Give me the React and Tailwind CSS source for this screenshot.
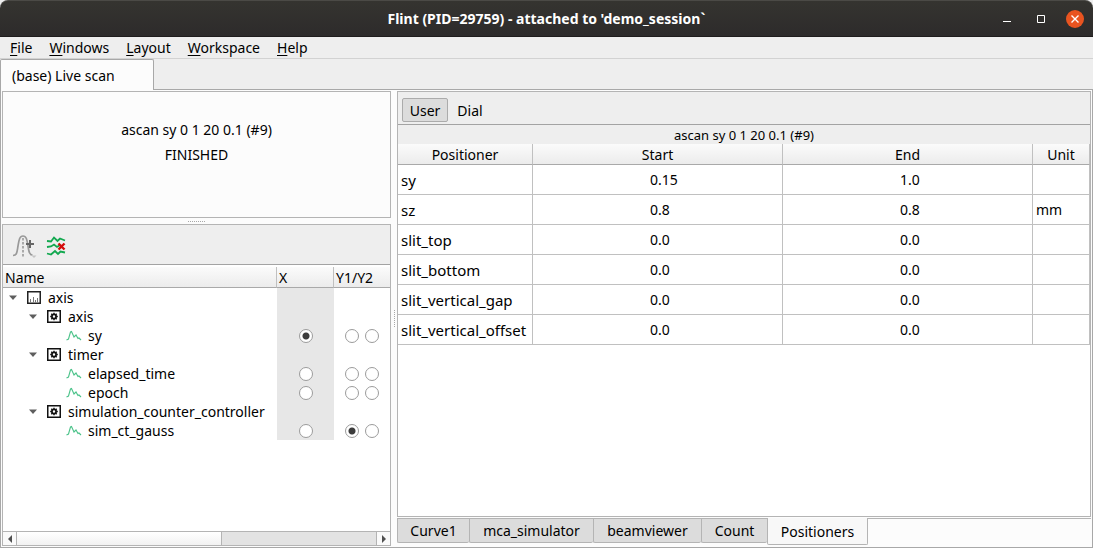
import { useState } from "react";
import clsx from "clsx";

const menus = ["File", "Windows", "Layout", "Workspace", "Help"];

const tree = [
    { id: "axis-root", name: "axis", level: 0, icon: "scan" },
    { id: "axis", name: "axis", level: 1, icon: "device" },
    { id: "sy", name: "sy", level: 2, icon: "curve" },
    { id: "timer", name: "timer", level: 1, icon: "device" },
    { id: "elapsed_time", name: "elapsed_time", level: 2, icon: "curve" },
    { id: "epoch", name: "epoch", level: 2, icon: "curve" },
    { id: "controller", name: "simulation_counter_controller", level: 1, icon: "device" },
    { id: "sim_ct_gauss", name: "sim_ct_gauss", level: 2, icon: "curve" },
];

const positioners = [
    { name: "sy", start: "0.15", end: "1.0", unit: "" },
    { name: "sz", start: "0.8", end: "0.8", unit: "mm" },
    { name: "slit_top", start: "0.0", end: "0.0", unit: "" },
    { name: "slit_bottom", start: "0.0", end: "0.0", unit: "" },
    { name: "slit_vertical_gap", start: "0.0", end: "0.0", unit: "" },
    { name: "slit_vertical_offset", start: "0.0", end: "0.0", unit: "" },
];

const bottomTabs = [
    { name: "Curve1", width: "w-[72px]" },
    { name: "mca_simulator", width: "w-[124px]" },
    { name: "beamviewer", width: "w-[108px]" },
    { name: "Count", width: "w-[66px]" },
    { name: "Positioners", width: "w-[101px]" },
];

const indents = ["pl-0", "pl-5", "pl-10"];

function TreeIcon({ type }) {
    if (type === "scan") {
        return (
            <svg width="16" height="16" viewBox="0 0 16 16" fill="none" className="shrink-0">
                <rect x="1.75" y="1.75" width="12.5" height="11.5" stroke="#222" strokeWidth="1.5" />
                <path d="M4.5 12.5V9M7.5 12.5V7M9.5 12.5V10M11.5 12.5V8" stroke="#777" />
            </svg>
        );
    }
    if (type === "device") {
        return (
            <svg width="16" height="16" viewBox="0 0 16 16" fill="none" className="shrink-0">
                <rect x="1.75" y="1.75" width="12.5" height="11.5" stroke="#111" strokeWidth="1.5" />
                <circle cx="8" cy="7.5" r="2.1" stroke="#111" strokeWidth="1.8" />
                <path d="M8 3.700v1.500M8 9.800v1.500M4.200 7.500h1.500M10.300 7.500h1.500M5.300 4.800l1 1M9.700 9.200l1 1M5.300 10.200l1-1M9.700 5.800l1-1" stroke="#111" strokeWidth="1.4" />
            </svg>
        );
    }
    return (
        <svg width="16" height="16" viewBox="0 0 16 16" fill="none" className="shrink-0">
            <path d="M0.5 12L2.5 11L4.5 4L5.5 3.500L8 9L10 7L12 10.500L13 10L15 12" stroke="#4cc38a" strokeWidth="1.1" />
        </svg>
    );
}

function Radio({ name, label, checked, onChange }) {
    return (
        <input
            type="radio"
            name={name}
            aria-label={label}
            checked={checked}
            onChange={onChange}
            className="block size-[14px] shrink-0 appearance-none rounded-full border border-[#9b9b9b] bg-white checked:bg-[radial-gradient(circle,#3c3c3c_3px,white_4px)]"
        />
    );
}

function TitleBar() {
    return (
        <header className="grid h-[37px] shrink-0 grid-cols-[1fr_auto_1fr] items-center rounded-t-lg border-t border-b border-t-[#4b4a46] border-b-[#1f1d1d] bg-linear-to-b from-[#353430] to-[#2d2b2b] text-white">
            <h1 className="col-start-2 text-sm font-bold">Flint (PID=29759) - attached to 'demo_session`</h1>
            <div className="flex items-center justify-end pr-[9px]">
                <button aria-label="Minimize" className="flex size-[18px] items-center justify-center">
                    <svg width="10" height="10" viewBox="0 0 10 10"><path d="M1 7.500h8" stroke="white" /></svg>
                </button>
                <button aria-label="Maximize" className="ml-4 flex size-[18px] items-center justify-center">
                    <svg width="8" height="8" viewBox="0 0 8 8" fill="none"><path d="M0.500 0.500h7v7h-7z" stroke="white" /></svg>
                </button>
                <button aria-label="Close" className="ml-4 flex size-[18px] items-center justify-center rounded-full bg-[#e95420]">
                    <svg width="8" height="8" viewBox="0 0 8 8"><path d="M0.500 0.500l7 7M7.500 0.500l-7 7" stroke="white" strokeWidth="1.400" /></svg>
                </button>
            </div>
        </header>
    );
}

function SelectionPanel() {
    const [x, setX] = useState("sy");
    const [y, setY] = useState("sim_ct_gauss-y1");

    return (
        <section className="flex min-h-0 flex-1 flex-col border border-[#b4b4b4] bg-white">
            <div className="flex h-10 shrink-0 items-center border-b border-[#a3a3a3] bg-[#eeeeee] pt-0.5 pl-2">
                <button aria-label="Add peak" className="flex h-8 w-7 items-center justify-center">
                    <svg width="26" height="24" viewBox="0 0 26 24" fill="none">
                        <path d="M1 21.5C5 21.5 5 18 6 12C7 6 7.5 2 11 2C14.5 2 15 6 16 12C17 18 17.5 21 20.5 21" stroke="#999" strokeWidth="1.7" />
                        <path d="M11 4v19" stroke="#999" strokeWidth="1.6" strokeDasharray="2.5 1.5" />
                        <path d="M18 6v8M14 10h8" stroke="#666" strokeWidth="2" />
                        <path d="M19.5 21.5h5l-2.5 2.5z" fill="#c4c4c4" />
                    </svg>
                </button>
                <button aria-label="Remove all plots" className="ml-1 flex h-8 w-[26px] items-center justify-center">
                    <svg width="20" height="20" viewBox="0 0 20 20" fill="none">
                        <path d="M1 5L5 5.5L8 1.5L11.5 5L14 2.5L19 4.5M1 11L5 10.5L8 8.5L11 11L14 9M1 17.5L5 18.5L9 15L12 18L14.5 15.5L19 16.5" stroke="#12a84f" strokeWidth="1.8" />
                        <path d="M12.5 7.5l6 6M18.5 7.5l-6 6" stroke="#d40b0b" strokeWidth="2.4" />
                    </svg>
                </button>
            </div>
            <div className="min-h-0 flex-1 overflow-hidden pt-0.5">
                <table className="w-full table-fixed border-separate border-spacing-0">
                    <colgroup>
                        <col />
                        <col className="w-[57px]" />
                        <col className="w-14" />
                    </colgroup>
                    <thead>
                        <tr className="h-[21px] bg-linear-to-b from-[#fbfbfb] to-[#ebebeb] text-left">
                            <th className="border-r border-b border-r-[#c0c0c0] border-b-[#a9a9a9] p-0 pt-0.5 pl-0.5 font-normal">Name</th>
                            <th className="border-r border-b border-r-[#c0c0c0] border-b-[#a9a9a9] p-0 pt-0.5 pl-0.5 font-normal">X</th>
                            <th className="border-b border-[#a9a9a9] p-0 pt-0.5 pl-0.5 font-normal">Y1/Y2</th>
                        </tr>
                    </thead>
                    <tbody>
                        {tree.map(item => (
                            <tr key={item.id} className="h-[19px]">
                                <td className="p-0">
                                    <div className={clsx("flex h-[19px] items-center", indents[item.level])}>
                                        <span className="flex w-[23px] shrink-0 items-center pl-1.5">
                                            {item.level < 2 && (
                                                <svg width="8" height="5" viewBox="0 0 8 5"><path d="M0 0.5h8L4 5z" fill="#5e5e5e" /></svg>
                                            )}
                                        </span>
                                        <TreeIcon type={item.icon} />
                                        <span className="pl-1.5 whitespace-nowrap">{item.name}</span>
                                    </div>
                                </td>
                                <td className="bg-[#e7e7e7] p-0">
                                    {item.level === 2 && (
                                        <div className="flex justify-center">
                                            <Radio name="x" label={`${item.name} X`} checked={x === item.id} onChange={() => setX(item.id)} />
                                        </div>
                                    )}
                                </td>
                                <td className="p-0">
                                    {item.level === 2 && (
                                        <div className="flex justify-center gap-1.5">
                                            <Radio name="y" label={`${item.name} Y1`} checked={y === `${item.id}-y1`} onChange={() => setY(`${item.id}-y1`)} />
                                            <Radio name="y" label={`${item.name} Y2`} checked={y === `${item.id}-y2`} onChange={() => setY(`${item.id}-y2`)} />
                                        </div>
                                    )}
                                </td>
                            </tr>
                        ))}
                    </tbody>
                </table>
            </div>
            <div className="flex h-[14px] shrink-0 border-t border-[#b4b4b4] bg-[#e3e3e3]">
                <button aria-label="Scroll left" className="flex w-[14px] items-center justify-center border-r border-[#b4b4b4] bg-[#fafafa]">
                    <svg width="4" height="8" viewBox="0 0 4 8"><path d="M4 0v8L0 4z" fill="#505050" /></svg>
                </button>
                <div className="flex flex-1">
                    <div className="w-[57%] border-r border-[#b4b4b4] bg-linear-to-b from-white to-[#f2f2f2]" />
                </div>
                <button aria-label="Scroll right" className="flex w-[14px] items-center justify-center border-l border-[#b4b4b4] bg-[#fafafa]">
                    <svg width="4" height="8" viewBox="0 0 4 8"><path d="M0 0v8L4 4z" fill="#505050" /></svg>
                </button>
            </div>
        </section>
    );
}

function PositionersPanel() {
    const [mode, setMode] = useState("User");

    return (
        <section className="flex min-h-0 flex-1 flex-col border border-[#b4b4b4] bg-white">
            <div className="flex h-[33px] shrink-0 items-center gap-1 border-b border-[#a3a3a3] bg-[#eeeeee] pt-1 pl-1">
                {["User", "Dial"].map(name => (
                    <button
                        key={name}
                        onClick={() => setMode(name)}
                        className={clsx("h-6 rounded-xs border pt-0.5", name === "User" ? "w-[46px]" : "w-9", mode === name ? "border-[#ababab] bg-[#dcdcdc]" : "border-transparent")}
                    >
                        {name}
                    </button>
                ))}
            </div>
            <table className="w-full table-fixed border-separate border-spacing-0">
                <caption className="h-[19px] bg-[#eeeeee] pt-0.5 text-[13px] leading-[17px]">ascan sy 0 1 20 0.1 (#9)</caption>
                <colgroup>
                    <col className="w-[135px]" />
                    <col />
                    <col />
                    <col className="w-[57px]" />
                </colgroup>
                <thead>
                    <tr className="h-[21px] bg-linear-to-b from-[#fbfbfb] to-[#ebebeb]">
                        {["Positioner", "Start", "End", "Unit"].map(name => (
                            <th key={name} className="border-r border-b border-r-[#c0c0c0] border-b-[#a9a9a9] p-0 pt-0.5 font-normal">{name}</th>
                        ))}
                    </tr>
                </thead>
                <tbody>
                    {positioners.map(row => (
                        <tr key={row.name} className="h-[30px]">
                            <td className="border-r border-b border-[#c0c0c0] p-0 pl-[3px] text-[15px] whitespace-nowrap">{row.name}</td>
                            <td className="border-r border-b border-[#c0c0c0] p-0"><div className="pl-[47%]">{row.start}</div></td>
                            <td className="border-r border-b border-[#c0c0c0] p-0"><div className="pl-[47%]">{row.end}</div></td>
                            <td className="border-r border-b border-[#c0c0c0] p-0 pl-[3px]">{row.unit}</td>
                        </tr>
                    ))}
                </tbody>
            </table>
        </section>
    );
}

export default function App() {
    const [tab, setTab] = useState("Positioners");

    return (
        <div className="flex h-screen flex-col bg-[#eeeeee] font-['Noto_Sans',sans-serif] text-sm leading-[18px] text-black">
            <TitleBar />
            <nav className="flex h-[22px] shrink-0 items-center gap-[17px] border-b border-[#d2d2d2] pl-2.5">
                {menus.map(name => (
                    <button key={name}>
                        <span className="underline decoration-1 underline-offset-2">{name[0]}</span>
                        {name.slice(1)}
                    </button>
                ))}
            </nav>
            <div className="flex h-[31px] shrink-0">
                <button className="w-[154px] rounded-t-xs border border-b-0 border-[#a8a8a8] bg-[#fcfcfc] pt-0.5 pl-[11px] text-left">(base) Live scan</button>
                <div className="flex-1 border-b border-[#a8a8a8]" />
            </div>
            <main className="flex min-h-0 flex-1 border border-t-0 border-[#a8a8a8] bg-[#fcfcfc] p-px">
                <div className="flex w-[389px] shrink-0 flex-col">
                    <section className="flex h-[127px] shrink-0 flex-col items-center justify-center gap-[7px] border border-[#b4b4b4] pb-6">
                        <p>ascan sy 0 1 20 0.1 (#9)</p>
                        <p>FINISHED</p>
                    </section>
                    <div className="flex h-1.5 shrink-0 items-center justify-center">
                        <div className="w-[17px] border-t border-dotted border-[#a8a8a8]" />
                    </div>
                    <SelectionPanel />
                </div>
                <div className="flex w-1.5 shrink-0 items-center justify-center">
                    <div className="h-[17px] border-l border-dotted border-[#a8a8a8]" />
                </div>
                <div className="flex min-w-0 flex-1 flex-col">
                    <PositionersPanel />
                    <div className="mt-px flex h-7 shrink-0">
                        {bottomTabs.map(({ name, width }) => (
                            <button
                                key={name}
                                onClick={() => setTab(name)}
                                className={clsx(
                                    "rounded-b-xs border border-[#b4b4b4]",
                                    width,
                                    tab === name ? "h-[27px] border-t-0 bg-[#f8f8f8] pt-0.5" : "h-[25px] border-r-0 bg-[#dcdcdc]"
                                )}
                            >
                                {name}
                            </button>
                        ))}
                        <div className="flex-1 border-t border-[#b4b4b4]" />
                    </div>
                </div>
            </main>
        </div>
    );
}
